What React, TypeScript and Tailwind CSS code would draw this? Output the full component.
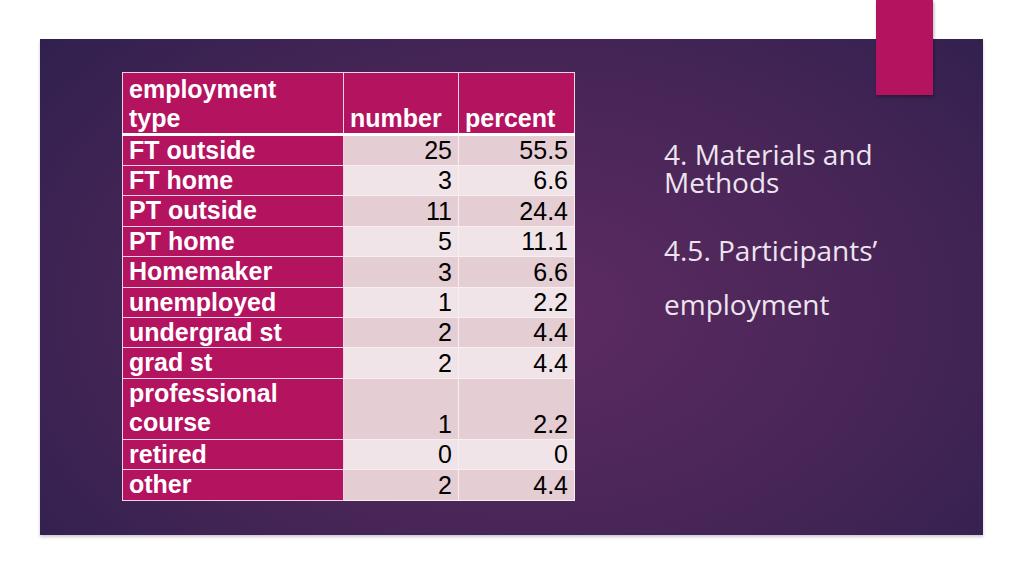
const rows = [
  { label: "FT outside", n: "25", p: "55.5" },
  { label: "FT home", n: "3", p: "6.6" },
  { label: "PT outside", n: "11", p: "24.4" },
  { label: "PT home", n: "5", p: "11.1" },
  { label: "Homemaker", n: "3", p: "6.6" },
  { label: "unemployed", n: "1", p: "2.2" },
  { label: "undergrad st", n: "2", p: "4.4" },
  { label: "grad st", n: "2", p: "4.4" },
  { label: "professional course", n: "1", p: "2.2", tall: true },
  { label: "retired", n: "0", p: "0" },
  { label: "other", n: "2", p: "4.4" },
]

export default function App() {
  return (
    <div className="relative w-[1024px] h-[575px] bg-white overflow-hidden font-['Liberation_Sans',Arial,sans-serif]">
      <div className="pt-[39px] pl-[40px]">
        {/* slide panel */}
        <div className="w-[943px] h-[496px] flex bg-[radial-gradient(ellipse_75%_95%_at_52%_55%,#5d2b61_0%,#4a2658_45%,#2b1f4c_100%)] shadow-[0_2px_3px_rgba(60,30,80,0.25)]">
          <div className="pl-[82px] pt-[33px]">
            <table className="border-collapse text-[25px] leading-[29px]">
              <thead>
                <tr className="h-[61px] bg-[#b3135f] text-white font-bold">
                  <th className="w-[221px] border border-[#f2d3e3] px-[6px] text-left align-top pt-[2px] font-bold">
                    employment
                    <br />
                    type
                  </th>
                  <th className="w-[115px] border border-[#f2d3e3] px-[6px] text-left align-bottom font-bold">
                    number
                  </th>
                  <th className="w-[116px] border border-[#f2d3e3] px-[6px] text-left align-bottom font-bold">
                    percent
                  </th>
                </tr>
              </thead>
              <tbody>
                {rows.map((r, i) => (
                  <tr
                    key={r.label}
                    className={`${r.tall ? "h-[61px]" : "h-[30.4px]"} ${i === 0 ? "border-t-[3px] border-t-white" : ""}`}
                  >
                    <td className="border border-[#f2d3e3] bg-[#b3135f] text-white font-bold px-[6px] align-top">
                      {r.tall ? (
                        <>
                          professional
                          <br />
                          course
                        </>
                      ) : (
                        r.label
                      )}
                    </td>
                    <td
                      className={`border border-[#f7eef1] ${i % 2 === 0 ? "bg-[#e5cdd4]" : "bg-[#f0e4e8]"} text-black text-right px-[6px] align-bottom`}
                    >
                      {r.n}
                    </td>
                    <td
                      className={`border border-[#f7eef1] ${i % 2 === 0 ? "bg-[#e5cdd4]" : "bg-[#f0e4e8]"} text-black text-right px-[6px] align-bottom`}
                    >
                      {r.p}
                    </td>
                  </tr>
                ))}
              </tbody>
            </table>
          </div>

          {/* title text */}
          <div className="pl-[89px] pt-[101px] text-[#eee4f0] font-['Open_Sans',sans-serif] text-[28px] leading-[28px]">
            <div>4. Materials and</div>
            <div>Methods</div>
            <div className="mt-[40px]">4.5. Participants’</div>
            <div className="mt-[26px]">employment</div>
          </div>
        </div>
      </div>

      {/* magenta tab */}
      <div className="absolute left-[876px] top-0 w-[57px] h-[95px] bg-[#b3135f] shadow-[1px_2px_3px_rgba(0,0,0,0.3)]" />
    </div>
  )
}
